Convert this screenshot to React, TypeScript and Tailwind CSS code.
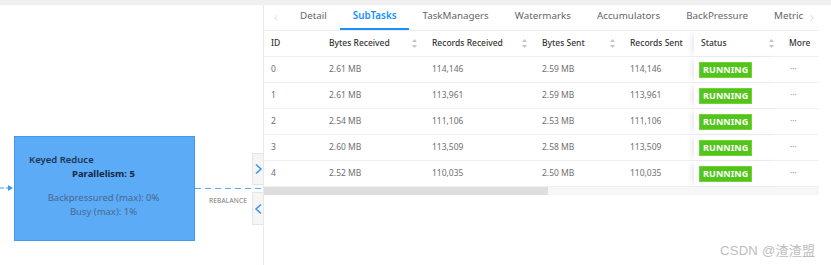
import { ChevronLeft, ChevronRight } from "lucide-react";

const rows = [
  { id: 0, br: "2.61 MB", rr: "114,146", bs: "2.59 MB", rs: "114,146" },
  { id: 1, br: "2.61 MB", rr: "113,961", bs: "2.59 MB", rs: "113,961" },
  { id: 2, br: "2.54 MB", rr: "111,106", bs: "2.53 MB", rs: "111,106" },
  { id: 3, br: "2.60 MB", rr: "113,509", bs: "2.58 MB", rs: "113,509" },
  { id: 4, br: "2.52 MB", rr: "110,035", bs: "2.50 MB", rs: "110,035" },
];

const tabs = ["Detail", "SubTasks", "TaskManagers", "Watermarks", "Accumulators", "BackPressure", "Metric"];

const cols = "grid grid-cols-[58px_103px_110px_88px_71px_88px_37px]";

const Sorter = () => (
  <svg width="7" height="11" viewBox="0 0 7 11" className="shrink-0">
    <path d="M3.5 1 L6 4 L1 4 Z" fill="#c4c4c4" />
    <path d="M3.5 10 L6 7 L1 7 Z" fill="#c4c4c4" />
  </svg>
);

const Chevron = ({ dir }: { dir: "left" | "right" }) => (
  <svg width="9" height="12" viewBox="0 0 9 12" className="shrink-0">
    <polyline
      points={dir === "right" ? "2,1.5 7,6 2,10.5" : "7,1.5 2,6 7,10.5"}
      fill="none"
      stroke="#3b95ef"
      strokeWidth="1.5"
    />
  </svg>
);

const HeadCell = ({ label, sort, fixed }: { label: string; sort?: boolean; fixed?: boolean }) => (
  <div
    className={`flex items-center justify-between pl-[7px] pr-[7px] ${
      fixed ? "shadow-[-5px_0_6px_-3px_rgba(0,0,0,0.10)]" : ""
    }`}
  >
    <span className="whitespace-nowrap">{label}</span>
    {sort && <Sorter />}
  </div>
);

export default function App() {
  return (
    <div
      className="w-[831px] h-[265px] bg-white flex flex-col overflow-hidden relative"
      style={{ fontFamily: '"Noto Sans", "Open Sans", sans-serif' }}
    >
      <div className="h-[5px] bg-[#f0f0f0] shrink-0" />
      <div className="flex flex-1">
        {/* graph canvas */}
        <div className="w-[263px] shrink-0 relative">
          <svg className="absolute left-0 top-[178px]" width="16" height="10" viewBox="0 0 16 10">
            <line x1="0" y1="5" x2="4" y2="5" stroke="#3a9cf5" strokeWidth="1" />
            <line x1="6" y1="5" x2="9" y2="5" stroke="#3a9cf5" strokeWidth="1" />
            <path d="M8 2 L13 5 L8 8 Z" fill="#3a9cf5" />
          </svg>
          <div className="absolute left-[14px] top-[131px] w-[181px] h-[105px] bg-[#5cabf7] border border-[#3f9bf2] text-[9.5px] leading-[14px]">
            <div className="pl-[14px] pt-[16px] font-semibold text-[#1f3450]">Keyed Reduce</div>
            <div className="pl-[57px] font-bold text-[#142840]">Parallelism: 5</div>
            <div className="mt-[10px] text-center text-[#48688e] pr-[2px]">Backpressured (max): 0%</div>
            <div className="text-center text-[#48688e] pr-[2px]">Busy (max): 1%</div>
          </div>
          <svg className="absolute left-[195px] top-[182px]" width="68" height="3" viewBox="0 0 68 3">
            <line x1="0" y1="1.5" x2="68" y2="1.5" stroke="#5aa9f2" strokeWidth="1" strokeDasharray="6 4" />
          </svg>
          <div className="absolute left-[209px] top-[191px] text-[6.5px] tracking-[0.2px] text-[#777]">REBALANCE</div>
          <div className="absolute left-[252px] top-[148px] w-[11px] h-[32px] bg-[#f5f5f5] border border-r-0 border-[#e4e4e4] flex items-center justify-center">
            <Chevron dir="right" />
          </div>
          <div className="absolute left-[252px] top-[187px] w-[11px] h-[33px] bg-[#f5f5f5] border border-r-0 border-[#e4e4e4] flex items-center justify-center">
            <Chevron dir="left" />
          </div>
        </div>

        {/* detail panel */}
        <div className="w-[566px] shrink-0 border-l border-[#e8e8e8] flex flex-col">
          <div className="w-[555px] h-[26px] flex items-stretch border-b border-[#ececec] text-[9.8px] text-[#666] relative">
            <div className="w-[23px] shrink-0 flex items-center justify-center text-[#c8c8c8]">
              <ChevronLeft size={10} strokeWidth={1.5} />
            </div>
            <div className="flex-1 flex overflow-hidden">
              {tabs.map((t) => (
                <div
                  key={t}
                  className={`px-[13px] flex items-center whitespace-nowrap border-b-2 ${
                    t === "SubTasks" ? "text-[#1890ff] font-semibold border-[#1890ff]" : "border-transparent"
                  }`}
                >
                  {t}
                </div>
              ))}
            </div>
            <div className="w-[14px] shrink-0 flex items-center justify-center text-[#b8b8b8] bg-white">
              <ChevronRight size={10} strokeWidth={1.5} />
            </div>
          </div>

          <div className="w-[555px] text-[8.5px]">
            <div className={`${cols} h-[26px] text-[#333] font-medium border-b border-[#f0f0f0]`}>
              <HeadCell label="ID" />
              <HeadCell label="Bytes Received" sort />
              <HeadCell label="Records Received" sort />
              <HeadCell label="Bytes Sent" sort />
              <HeadCell label="Records Sent" />
              <HeadCell label="Status" sort fixed />
              <HeadCell label="More" />
            </div>
            {rows.map((r) => (
              <div key={r.id} className={`${cols} h-[26px] text-[#707070] border-b border-[#f0f0f0]`}>
                <div className="flex items-center pl-[7px]">{r.id}</div>
                <div className="flex items-center pl-[7px]">{r.br}</div>
                <div className="flex items-center pl-[7px]">{r.rr}</div>
                <div className="flex items-center pl-[7px]">{r.bs}</div>
                <div className="flex items-center pl-[7px]">{r.rs}</div>
                <div className="flex items-center pl-[5px] shadow-[-5px_0_6px_-3px_rgba(0,0,0,0.10)]">
                  <span className="h-[16px] px-[3px] flex items-center bg-[#52c41a] border border-[#73d13d] text-white font-bold text-[9px] tracking-[0.1px]">
                    RUNNING
                  </span>
                </div>
                <div className="flex items-center pl-[8px] text-[#999]">···</div>
              </div>
            ))}
            <div className="h-[8px] bg-[#f7f7f7] flex">
              <div className="w-[284px] bg-[#dedede]" />
            </div>
          </div>
        </div>
      </div>
      <div
        className="absolute left-[720px] top-[241px] text-[13px] tracking-[0.3px] text-[#bdbdbd] whitespace-nowrap"
        style={{ fontFamily: '"Liberation Sans", "Noto Sans CJK SC", sans-serif' }}
      >
        CSDN @渣渣盟
      </div>
    </div>
  );
}
